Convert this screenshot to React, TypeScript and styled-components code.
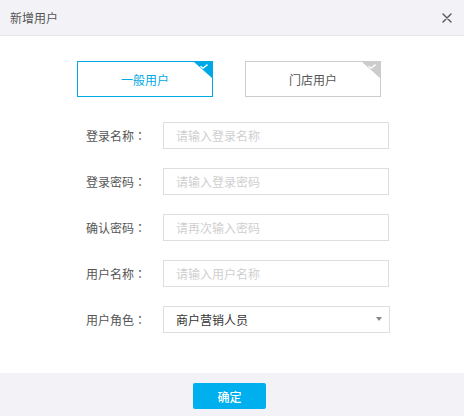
import React, { useState } from "react";
import styled, { createGlobalStyle } from "styled-components";

const GlobalStyle = createGlobalStyle`
  html, body {
    margin: 0;
    padding: 0;
    background: #fff;
  }
  * {
    box-sizing: border-box;
  }
  body {
    font-family: "Noto Sans CJK SC", "Noto Sans", sans-serif;
  }
`;

const userTypes = ["一般用户", "门店用户"];

const fields = [
  { label: "登录名称", placeholder: "请输入登录名称" },
  { label: "登录密码", placeholder: "请输入登录密码" },
  { label: "确认密码", placeholder: "请再次输入密码" },
  { label: "用户名称", placeholder: "请输入用户名称" },
];

export default function App() {
  const [active, setActive] = useState(0);
  return (
    <>
      <GlobalStyle />
      <Dialog>
        <Header>
          <Title>新增用户</Title>
          <CloseBtn aria-label="close">
            <svg width="10" height="10" viewBox="0 0 10 10">
              <path d="M1 1L9 9M9 1L1 9" stroke="#555" strokeWidth="1.4" strokeLinecap="round" />
            </svg>
          </CloseBtn>
        </Header>
        <Body>
          <TypeRow>
            {userTypes.map((t, i) => (
              <TypeCard key={t} $active={active === i} onClick={() => setActive(i)}>
                {t}
                <Corner width="18" height="16" viewBox="0 0 18 16">
                  <polygon points="0,0 18,0 18,16" fill={active === i ? "#00a9e6" : "#cccccc"} />
                  <path d="M6.5 4.2L9 6.2L13.5 2.6" stroke="#fff" strokeWidth="1.4" fill="none" />
                </Corner>
              </TypeCard>
            ))}
          </TypeRow>
          <Form>
            {fields.map(f => (
              <FormRow key={f.label}>
                <Label>
                  {f.label}
                  <Colon>：</Colon>
                </Label>
                <Input placeholder={f.placeholder} />
              </FormRow>
            ))}
            <FormRow>
              <Label>
                用户角色
                <Colon>：</Colon>
              </Label>
              <Select>
                商户营销人员
                <Arrow />
              </Select>
            </FormRow>
          </Form>
        </Body>
        <Footer>
          <OkBtn>确定</OkBtn>
        </Footer>
      </Dialog>
    </>
  );
}

const Dialog = styled.div`
  width: 464px;
  height: 416px;
  display: flex;
  flex-direction: column;
  background: #fff;
  overflow: hidden;
`;

const Header = styled.div`
  height: 36px;
  display: flex;
  align-items: center;
  justify-content: space-between;
  padding: 0 12px 0 10px;
  background: #f3f3f7;
  border-bottom: 1px solid #e6e6ea;
`;

const Title = styled.span`
  font-size: 12px;
  color: #555;
`;

const CloseBtn = styled.button`
  border: none;
  background: none;
  padding: 0;
  width: 10px;
  height: 10px;
  display: flex;
  cursor: pointer;
`;

const Body = styled.div`
  flex: 1;
  padding-top: 25px;
`;

const TypeRow = styled.div`
  display: flex;
  gap: 32px;
  padding-left: 77px;
`;

const TypeCard = styled.div<{ $active: boolean }>`
  position: relative;
  width: 136px;
  height: 36px;
  display: flex;
  align-items: center;
  justify-content: center;
  font-size: 12px;
  color: ${p => (p.$active ? "#00a9e6" : "#555")};
  border: 1px solid ${p => (p.$active ? "#00a9e6" : "#cccccc")};
  cursor: pointer;
`;

const Corner = styled.svg`
  position: absolute;
  top: 0;
  right: 0;
`;

const Form = styled.div`
  display: flex;
  flex-direction: column;
  gap: 19px;
  padding: 25px 0 0 86px;
`;

const FormRow = styled.div`
  display: flex;
  align-items: center;
`;

const Label = styled.span`
  width: 77px;
  font-size: 12px;
  color: #555;
`;

const Colon = styled.span`
  font-family: "Noto Sans CJK TC", "Noto Sans CJK SC", sans-serif;
`;

const Input = styled.input`
  width: 226px;
  height: 27px;
  border: 1px solid #dedede;
  padding: 0 12px;
  font-family: inherit;
  font-size: 12px;
  color: #333;
  outline: none;
  &::placeholder {
    color: #cfcfcf;
  }
`;

const Select = styled.div`
  position: relative;
  width: 227px;
  height: 27px;
  border: 1px solid #dedede;
  padding: 0 12px;
  display: flex;
  align-items: center;
  font-size: 12px;
  color: #333;
`;

const Arrow = styled.span`
  position: absolute;
  right: 7px;
  top: 10px;
  width: 0;
  height: 0;
  border-left: 3px solid transparent;
  border-right: 3px solid transparent;
  border-top: 4px solid #888;
`;

const Footer = styled.div`
  height: 43px;
  background: #f3f3f7;
  display: flex;
  justify-content: center;
  padding-top: 10px;
`;

const OkBtn = styled.button`
  width: 73px;
  height: 26px;
  margin-right: 5px;
  border: none;
  border-radius: 2px;
  background: #00b0ee;
  color: #fff;
  font-family: inherit;
  font-size: 12px;
  font-weight: 500;
  cursor: pointer;
`;
